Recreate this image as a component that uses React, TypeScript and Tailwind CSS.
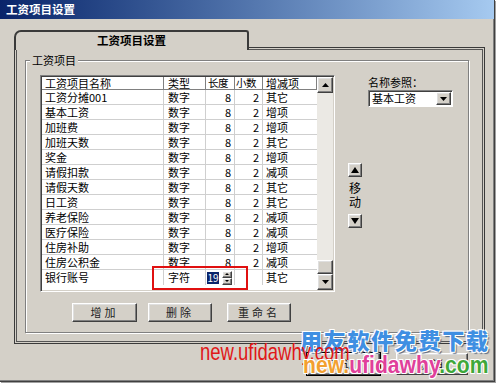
import React from 'react';

const rows: string[][] = [
  ['工资分摊001', '数字', '8', '2', '其它'],
  ['基本工资', '数字', '8', '2', '增项'],
  ['加班费', '数字', '8', '2', '增项'],
  ['加班天数', '数字', '8', '2', '其它'],
  ['奖金', '数字', '8', '2', '增项'],
  ['请假扣款', '数字', '8', '2', '减项'],
  ['请假天数', '数字', '8', '2', '其它'],
  ['日工资', '数字', '8', '2', '其它'],
  ['养老保险', '数字', '8', '2', '减项'],
  ['医疗保险', '数字', '8', '2', '减项'],
  ['住房补助', '数字', '8', '2', '增项'],
  ['住房公积金', '数字', '8', '2', '减项'],
];

const raised =
  'border border-t-white border-l-white border-r-[#404040] border-b-[#404040] shadow-[inset_-1px_-1px_0_#808080,inset_1px_1px_0_#dfdfdf] bg-[#d4d0c8]';

const Up = ({ w = 7, h = 4 }: { w?: number; h?: number }) => (
  <svg width={w} height={h} viewBox={`0 0 ${w} ${h}`}>
    <path d={`M0 ${h} L${w / 2} 0 L${w} ${h} Z`} fill="#000" />
  </svg>
);

const Down = ({ w = 7, h = 4 }: { w?: number; h?: number }) => (
  <svg width={w} height={h} viewBox={`0 0 ${w} ${h}`}>
    <path d={`M0 0 L${w} 0 L${w / 2} ${h} Z`} fill="#000" />
  </svg>
);

function Row({ r }: { r: string[] }) {
  return (
    <div className="flex h-[15px] border-b border-[#cfcfcf] leading-[14px]">
      <div className="w-[122px] pl-[3px] border-r border-[#cfcfcf]">{r[0]}</div>
      <div className="w-[42px] pl-[4px] border-r border-[#cfcfcf]">{r[1]}</div>
      <div className="w-[29px] pr-[3px] text-right border-r border-[#cfcfcf]">{r[2]}</div>
      <div className="w-[28px] pr-[3px] text-right border-r border-[#cfcfcf]">{r[3]}</div>
      <div className="w-[54px] pl-[3px]">{r[4]}</div>
    </div>
  );
}

function Button({ w, label }: { w: string; label: string }) {
  return (
    <div className={`${w} h-[19px] flex items-center justify-center tracking-[3px] text-[11px] text-[#222] ${raised}`}>
      {label}
    </div>
  );
}

export default function App() {
  return (
    <div className="relative w-[500px] h-[387px] overflow-hidden bg-white font-['Noto_Sans_CJK_SC','Liberation_Sans',sans-serif] text-[11px] text-black">
      <div className="w-[495px] h-[382px] bg-[#d4d0c8] border-r border-b border-[#404040] shadow-[inset_-1px_-1px_0_#808080,1px_1px_0_#a0a0a0] flex flex-col">
        {/* 标题栏 */}
        <div className="h-[19px] flex items-center pl-[6px] bg-linear-to-r from-[#0a246a] to-[#a6caf0] text-white font-bold text-[11.5px]">
          工资项目设置
        </div>

        <div className="pl-[14px] pt-[11px]">
          {/* 页签 */}
          <div className="relative z-10 w-[235px] h-[20px] -mb-[3px] bg-[#d4d0c8] border-t-2 border-l-2 border-r-2 border-[#3a3a3a] rounded-tl-[7px] rounded-tr-[3px] flex justify-center pt-[1px] font-bold text-[11.5px] leading-[14px]">
            工资项目设置
          </div>

          {/* 页签面板 */}
          <div className="w-[471px] h-[297px] border border-[#3a3a3a] shadow-[inset_0_0_0_1px_#d4d0c8,inset_0_0_0_2px_#555]">
            {/* 分组框 */}
            <div className="relative ml-[10px] mt-[12px] w-[444px] h-[273px] border border-[#808080] shadow-[inset_1px_1px_0_#fff,1px_1px_0_#fff] pl-[14px] pt-[14px] flex">
              <div className="absolute -top-[8px] left-[4px] px-[2px] bg-[#d4d0c8] leading-[14px]">工资项目</div>

              {/* 左侧：表格和按钮 */}
              <div className="w-[295px] flex flex-col">
                <div className="relative w-[295px] h-[217px] flex bg-white border border-t-[#808080] border-l-[#808080] border-r-white border-b-white shadow-[inset_1px_1px_0_#404040,inset_-1px_-1px_0_#d4d0c8] p-[1px]">
                  <div className="w-[275px] flex flex-col">
                    <div className="flex h-[13px] border-b border-[#808080] leading-[12px] bg-white">
                      <div className="w-[122px] pl-[3px] border-r border-[#808080]">工资项目名称</div>
                      <div className="w-[42px] pl-[4px] border-r border-[#808080]">类型</div>
                      <div className="w-[29px] pl-[2px] border-r border-[#808080] text-[10.5px] tracking-[-0.5px]">长度</div>
                      <div className="w-[28px] pl-[1px] border-r border-[#808080] whitespace-nowrap text-[10.5px] tracking-[-0.5px]">小数</div>
                      <div className="w-[54px] pl-[3px] border-r border-[#808080]">增减项</div>
                    </div>
                    {rows.map((r) => (
                      <Row key={r[0]} r={r} />
                    ))}
                    <div className="flex h-[15px] leading-[14px]">
                      <div className="w-[122px] pl-[3px] border-r border-[#cfcfcf]">银行账号</div>
                      <div className="w-[42px] pl-[4px] border-r border-[#cfcfcf]">字符</div>
                      <div className="w-[29px] flex items-center pl-[1px] gap-[3px] border-r border-[#cfcfcf]">
                        <span className="w-[12px] h-[12px] bg-[#0a246a] text-white text-center leading-[12px] text-[10px]">19</span>
                        <span className="w-[10px] h-[14px] flex flex-col">
                          <span className={`h-[7px] flex items-center justify-center ${raised}`}>
                            <Up w={4} h={2} />
                          </span>
                          <span className={`h-[7px] flex items-center justify-center ${raised}`}>
                            <Down w={4} h={2} />
                          </span>
                        </span>
                      </div>
                      <div className="w-[28px] border-r border-[#cfcfcf]"></div>
                      <div className="w-[54px] pl-[3px]">其它</div>
                    </div>
                  </div>

                  {/* 滚动条 */}
                  <div className="w-[16px] flex flex-col bg-[#ebe9e4]">
                    <div className={`h-[16px] flex items-center justify-center ${raised}`}>
                      <Up />
                    </div>
                    <div className="flex-1"></div>
                    <div className={`h-[14px] ${raised}`}></div>
                    <div className={`h-[16px] flex items-center justify-center ${raised}`}>
                      <Down />
                    </div>
                  </div>

                  {/* 红色标注框 */}
                  <div className="absolute left-[111px] top-[190px] w-[96px] h-[24px] border-2 border-[#e01010]"></div>
                </div>

                <div className="flex mt-[11px] pl-[32px]">
                  <Button w="w-[65px]" label="增加" />
                  <div className="w-[11px]"></div>
                  <Button w="w-[64px]" label="删除" />
                  <div className="w-[15px]"></div>
                  <Button w="w-[64px]" label="重命名" />
                </div>
              </div>

              {/* 移动按钮 */}
              <div className="ml-[13px] mt-[88px] w-[14px] flex flex-col items-center">
                <div className={`w-[14px] h-[14px] flex items-center justify-center ${raised}`}>
                  <Up w={8} h={6} />
                </div>
                <div className="mt-[4px] leading-[14px] text-[12px] text-center">
                  移
                  <br />
                  动
                </div>
                <div className={`mt-[5px] w-[14px] h-[14px] flex items-center justify-center ${raised}`}>
                  <Down w={8} h={6} />
                </div>
              </div>

              {/* 名称参照 */}
              <div className="ml-[6px] flex flex-col">
                <div className="leading-[14px]">名称参照：</div>
                <div className="mt-[1px] w-[85px] h-[17px] flex items-center justify-between bg-white border border-t-[#808080] border-l-[#808080] border-r-white border-b-white shadow-[inset_1px_1px_0_#404040] pl-[3px] pr-[1px]">
                  <span className="leading-[13px]">基本工资</span>
                  <span className={`w-[15px] h-[13px] flex items-center justify-center ${raised}`}>
                    <Down />
                  </span>
                </div>
              </div>
            </div>
          </div>

          {/* 确认 / 取消 */}
          <div className="flex mt-[9px] pl-[293px] gap-[16px]">
            <div className={`w-[73px] h-[22px] flex items-center justify-center tracking-[4px] ${raised} outline outline-1 outline-black`}>确认</div>
            <div className={`w-[72px] h-[22px] flex items-center justify-center tracking-[4px] ${raised}`}>取消</div>
          </div>
        </div>
      </div>

      {/* 水印 */}
      <div className="absolute left-[300px] top-[325px] text-[22px] font-black tracking-[1.7px] leading-[28px] text-[#3f8fe2] [text-shadow:1px_1px_0_#fff,-1px_-1px_0_#fff,1px_-1px_0_#fff,-1px_1px_0_#fff,2px_2px_1px_#5a6a80]">
        用友软件免费下载
      </div>
      <div className="absolute left-[200px] top-[340px] text-[24px] leading-[24px] font-['Liberation_Sans',sans-serif] text-[#e01818] origin-left scale-x-[0.77] whitespace-nowrap">
        new.ufidawhy.com
      </div>
      <div className="absolute left-[303px] top-[353px] text-[24px] leading-[24px] font-bold font-['Liberation_Sans',sans-serif] origin-left scale-x-[0.88] whitespace-nowrap [text-shadow:1px_1px_0_#fff,-1px_-1px_0_#fff,1px_-1px_0_#fff,-1px_1px_0_#fff]">
        <span className="text-[#f2a030]">new.</span>
        <span className="text-[#e0409a]">ufidawhy</span>
        <span className="text-[#3fa83a]">.com</span>
      </div>
    </div>
  );
}
